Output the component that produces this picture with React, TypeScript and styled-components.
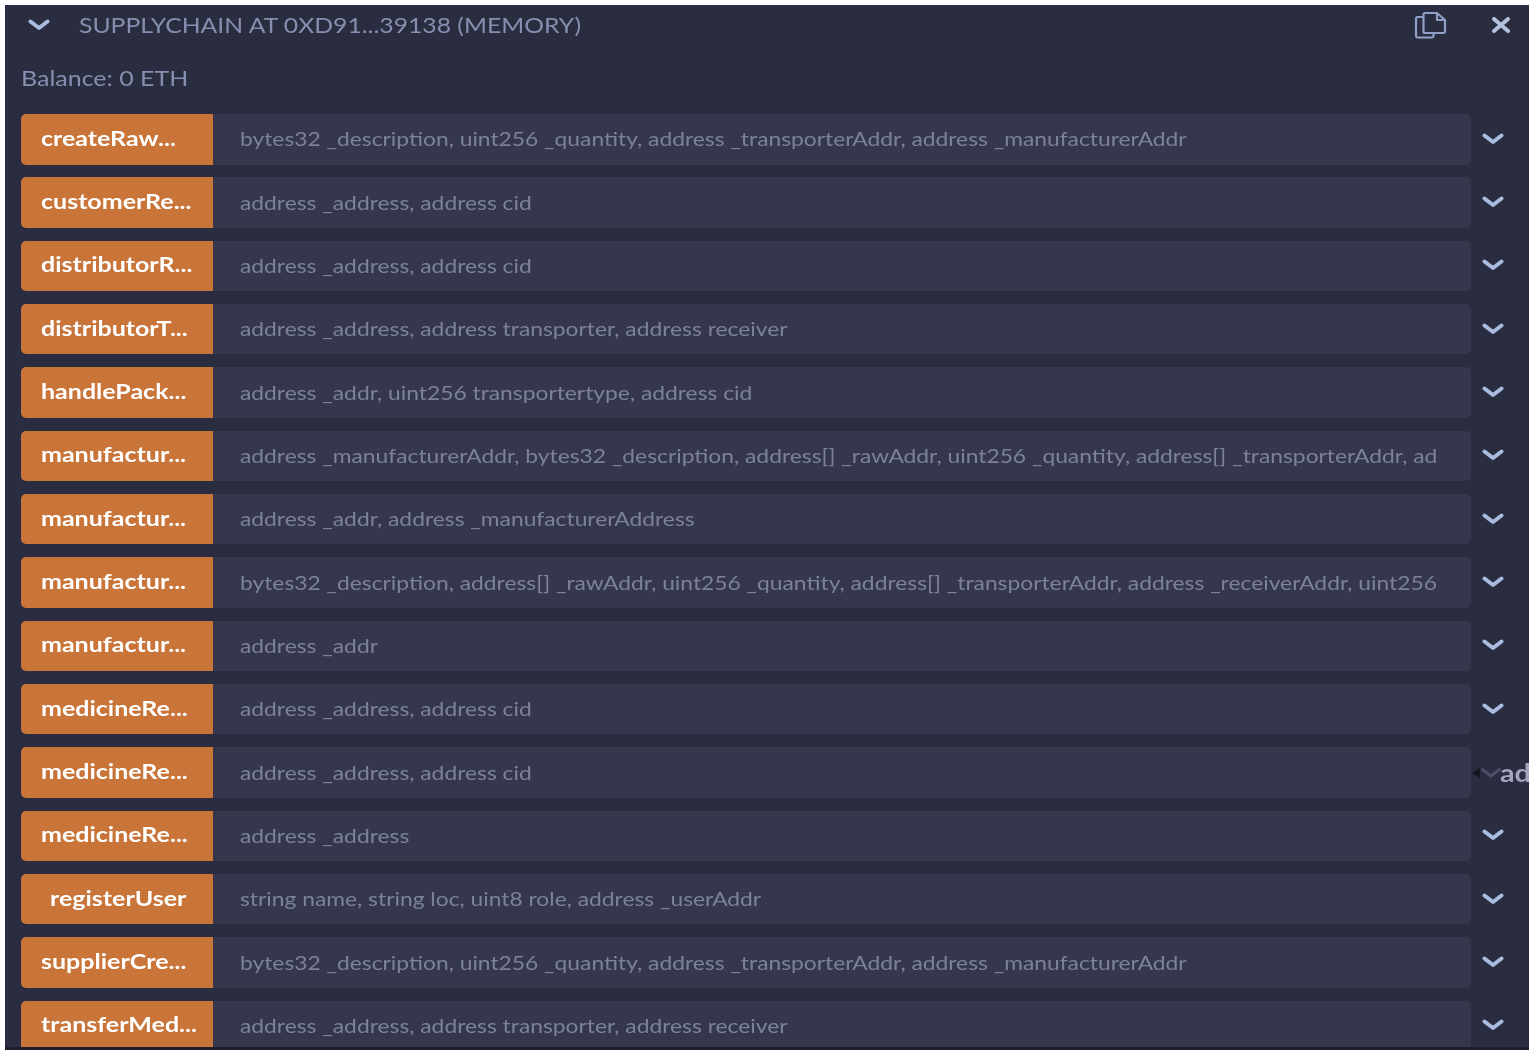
import React from "react";
import styled, { createGlobalStyle } from "styled-components";

const Global = createGlobalStyle`
  html, body { margin: 0; padding: 0; background: #ffffff; }
  body { font-family: Lato, "Open Sans", "Liberation Sans", sans-serif; }
`;

const Page = styled.div`
  width: 1535px;
  height: 1056px;
  padding: 5px 6px 6px 5px;
  box-sizing: border-box;
  background: #ffffff;
`;

const Panel = styled.div`
  height: 1045px;
  background: #2a2c3f;
  border-bottom: 3px solid #1d1e2b;
  box-sizing: border-box;
  overflow: hidden;
  position: relative;
  filter: blur(0.35px);
`;

const Header = styled.div`
  display: flex;
  align-items: center;
  height: 40px;
  padding: 0 18px 0 23px;
`;

const Wide = styled.span<{ $scale: number }>`
  display: inline-block;
  white-space: nowrap;
  transform: scaleX(${(p) => p.$scale});
  transform-origin: left center;
`;

const Title = styled.div`
  flex: 1;
  margin: 0 0 2px 29px;
  font-size: 21px;
  color: #868fb0;
  white-space: nowrap;
`;

const HeaderIcon = styled.svg`
  display: block;
  flex: none;
`;

const CloseIcon = styled.svg`
  display: block;
  flex: none;
  margin-left: 43px;
`;

const Balance = styled.div`
  margin: 19px 0 0 16px;
  height: 27px;
  line-height: 27px;
  font-size: 21px;
  color: #868fb0;
`;

const Rows = styled.div`
  display: flex;
  flex-direction: column;
  gap: 12.83px;
  margin: 23px 0 0 16px;
`;

const Row = styled.div`
  display: flex;
  align-items: stretch;
  height: 50.5px;
  flex: none;
  position: relative;
`;

const ActionButton = styled.div<{ $center?: boolean }>`
  width: 192px;
  flex: none;
  box-sizing: border-box;
  background: #c97539;
  border-radius: 5px 0 0 5px;
  color: #ffffff;
  font-size: 20px;
  font-weight: 700;
  display: flex;
  align-items: center;
  padding: 0 0 3px ${(p) => (p.$center ? "29px" : "20px")};
  white-space: nowrap;
`;

const Params = styled.div`
  width: 1258px;
  flex: none;
  box-sizing: border-box;
  background: #35384c;
  border-radius: 0 5px 5px 0;
  color: #7c8299;
  font-size: 20px;
  display: flex;
  align-items: center;
  padding: 0 0 2px 27px;
  white-space: nowrap;
  overflow: hidden;
`;

const ChevronCell = styled.div`
  flex: none;
  width: 44px;
  display: flex;
  align-items: center;
  justify-content: center;
  padding-bottom: 1px;
`;

const Tooltip = styled.div`
  position: absolute;
  left: 1451px;
  top: 0;
  bottom: 0;
  display: flex;
  align-items: center;
  color: #a2a3bd;
  font-size: 24px;
  font-weight: 700;
  white-space: nowrap;
`;

const TooltipArrow = styled.span`
  width: 0;
  height: 0;
  border-top: 5px solid transparent;
  border-bottom: 5px solid transparent;
  border-right: 8px solid #15161f;
`;

const TooltipChevron = styled.svg`
  display: block;
  margin: 0 -2px 0 0;
`;

const Chevron = ({ color = "#a9bcdf", width = 22 }: { color?: string; width?: number }) => (
  <HeaderIcon width={width} height={(width * 12) / 22} viewBox="0 0 22 12" fill="none">
    <path d="M2.5 2.5 L11 9 L19.5 2.5" stroke={color} strokeWidth="4" strokeLinecap="round" strokeLinejoin="round" />
  </HeaderIcon>
);

const rows: { name: string; params: string; center?: boolean; tooltip?: boolean }[] = [
  { name: "createRaw...", params: "bytes32 _description, uint256 _quantity, address _transporterAddr, address _manufacturerAddr" },
  { name: "customerRe...", params: "address _address, address cid" },
  { name: "distributorR...", params: "address _address, address cid" },
  { name: "distributorT...", params: "address _address, address transporter, address receiver" },
  { name: "handlePack...", params: "address _addr, uint256 transportertype, address cid" },
  { name: "manufactur...", params: "address _manufacturerAddr, bytes32 _description, address[] _rawAddr, uint256 _quantity, address[] _transporterAddr, ad" },
  { name: "manufactur...", params: "address _addr, address _manufacturerAddress" },
  { name: "manufactur...", params: "bytes32 _description, address[] _rawAddr, uint256 _quantity, address[] _transporterAddr, address _receiverAddr, uint256" },
  { name: "manufactur...", params: "address _addr" },
  { name: "medicineRe...", params: "address _address, address cid" },
  { name: "medicineRe...", params: "address _address, address cid", tooltip: true },
  { name: "medicineRe...", params: "address _address" },
  { name: "registerUser", params: "string name, string loc, uint8 role, address _userAddr", center: true },
  { name: "supplierCre...", params: "bytes32 _description, uint256 _quantity, address _transporterAddr, address _manufacturerAddr" },
  { name: "transferMed...", params: "address _address, address transporter, address receiver" },
];

export default function App() {
  return (
    <Page>
      <Global />
      <Panel>
        <Header>
          <Chevron />
          <Title><Wide $scale={1.178}>SUPPLYCHAIN AT 0XD91...39138 (MEMORY)</Wide></Title>
          <HeaderIcon width="34" height="28" viewBox="0 0 34 28" fill="none" stroke="#8f9fc6" strokeWidth="2.2" strokeLinejoin="round">
            <path d="M9 6H3.5a1.5 1.5 0 0 0-1.5 1.5V25a1.5 1.5 0 0 0 1.5 1.5H18a1.5 1.5 0 0 0 1.5-1.5v-3" />
            <path d="M11 2h12l8 7v11.5a1.5 1.5 0 0 1-1.5 1.5H11a1.5 1.5 0 0 1-1.5-1.5v-17A1.5 1.5 0 0 1 11 2z" />
            <path d="M23 2v7h8" />
          </HeaderIcon>
          <CloseIcon width="20" height="16" viewBox="0 0 20 16" fill="none">
            <path d="M3 2 L17 14 M17 2 L3 14" stroke="#b3c0de" strokeWidth="4" strokeLinecap="round" />
          </CloseIcon>
        </Header>
        <Balance><Wide $scale={1.19}>Balance: 0 ETH</Wide></Balance>
        <Rows>
          {rows.map((r, i) => (
            <Row key={i}>
              <ActionButton $center={r.center}><Wide $scale={1.25}>{r.name}</Wide></ActionButton>
              <Params><Wide $scale={1.14}>{r.params}</Wide></Params>
              {r.tooltip ? (
                <Tooltip>
                  <TooltipArrow />
                  <TooltipChevron width="22" height="12" viewBox="0 0 22 12" fill="none">
                    <path d="M2.5 2.5 L11 9 L19.5 2.5" stroke="#4a4e66" strokeWidth="3" strokeLinecap="round" />
                  </TooltipChevron>
                  <Wide $scale={1.2}>ad</Wide>
                </Tooltip>
              ) : (
                <ChevronCell>
                  <Chevron />
                </ChevronCell>
              )}
            </Row>
          ))}
        </Rows>
      </Panel>
    </Page>
  );
}
